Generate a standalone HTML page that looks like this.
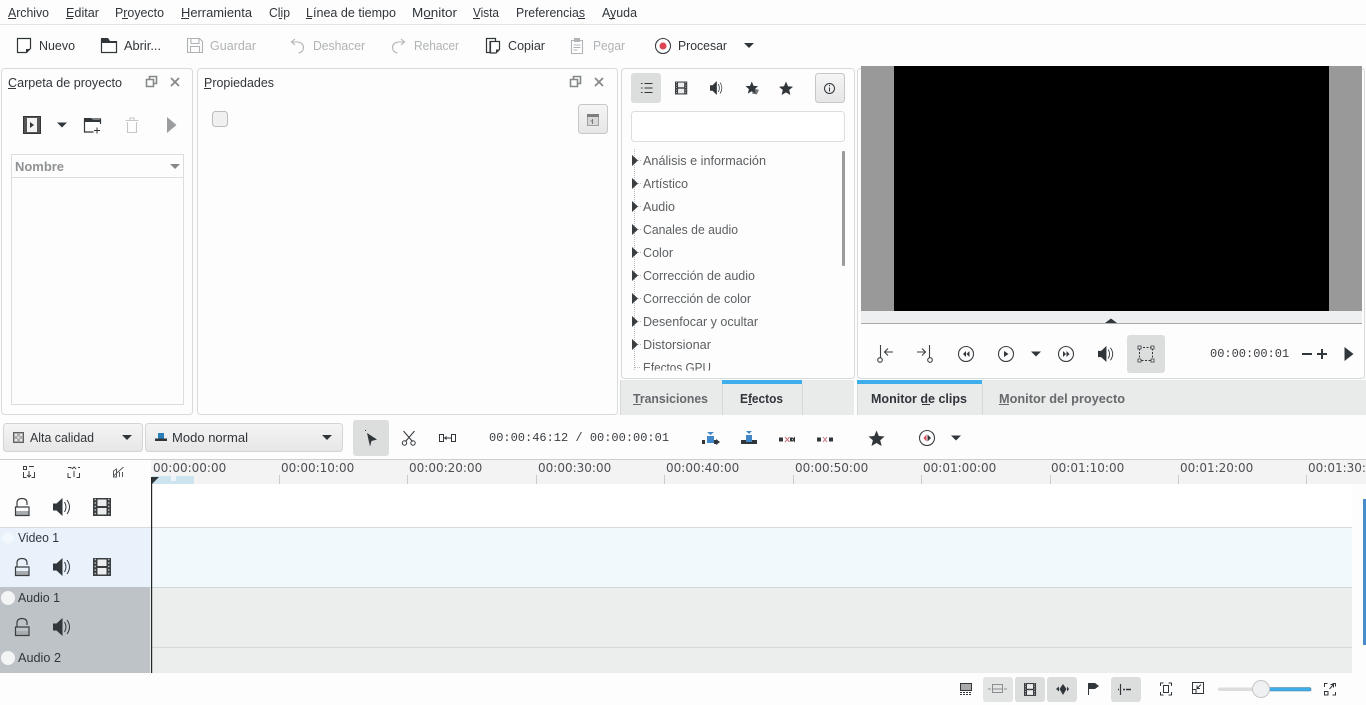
<!DOCTYPE html>
<html><head><meta charset="utf-8"><title>Kdenlive</title>
<style>
html,body{margin:0;padding:0;background:#fdfdfd;width:1366px;height:705px;overflow:hidden}
svg{display:block}
text{font-family:"Liberation Sans",sans-serif;font-size:12.5px;fill:#31363b}
.m{font-family:"Liberation Mono",monospace;font-size:12px;fill:#3a3e42}
.r{font-family:"DejaVu Sans",sans-serif;font-size:12px;fill:#4d4f52}
.d{fill:#b0b3b5}
.g{fill:#5c6063}
.t{font-weight:bold;fill:#666a6d}
.u{stroke:#31363b;stroke-width:1}
</style></head><body>
<svg width="1366" height="705" viewBox="0 0 1366 705" xmlns="http://www.w3.org/2000/svg">
<defs>
<linearGradient id="b" x1="0" y1="0" x2="0" y2="1"><stop offset="0" stop-color="#f5f5f5"/><stop offset="1" stop-color="#e6e6e6"/></linearGradient>
<g id="spk"><path d="M0 5.500h3.500l6-5.500v18l-6-5.500H0z" fill="#31363b"/><path d="M11.500 4q3 5 0 10M14 2q5 7 0 14" fill="none" stroke="#31363b" stroke-width="1"/></g>
<g id="lock"><rect x="2" y="12" width="12.500" height="4" fill="#a9acae"/><path d="M1.500 8V16.500H15V8ZM3 8V4Q3 -.5 8 -.5T13 4V6" fill="none" stroke="#3b3f42" stroke-width="1.200"/></g>
<g id="film"><rect x="0" y="0" width="18" height="18" fill="#3a3e41"/><rect x="4.500" y="1.500" width="9" height="6.500" fill="#eceded"/><rect x="4.500" y="10" width="9" height="6.500" fill="#eceded"/><path d="M1.500 1.500h1.500M1.500 5h1.500M1.500 8.500h1.500M1.500 12h1.500M1.500 15.500h1.500M15 1.500h1.500M15 5h1.500M15 8.500h1.500M15 12h1.500M15 15.500h1.500" stroke="#b5b7b8" stroke-width="1.400"/></g>
<g id="star"><path d="M7 0l2 4.800 5 .4-3.800 3.300 1.200 5L7 10.900 2.600 13.500l1.200-5L0 5.200l5-.4z" fill="#31363b"/></g>
<path id="dn" d="M0 0h10l-5 5z" fill="#31363b"/>
<path id="tri" d="M0 0l6 5.500-6 5.500z" fill="#3a3e41"/>
</defs>

<!-- menu -->
<rect x="0" y="24" width="1366" height="1" fill="#e3e4e5"/>
<g>
<text x="8" y="17" textLength="41" lengthAdjust="spacingAndGlyphs">Archivo</text>
<text x="66" y="17" textLength="33" lengthAdjust="spacingAndGlyphs">Editar</text>
<text x="115" y="17" textLength="49" lengthAdjust="spacingAndGlyphs">Proyecto</text>
<text x="181" y="17" textLength="71" lengthAdjust="spacingAndGlyphs">Herramienta</text>
<text x="269" y="17" textLength="21" lengthAdjust="spacingAndGlyphs">Clip</text>
<text x="306" y="17" textLength="90" lengthAdjust="spacingAndGlyphs">Línea de tiempo</text>
<text x="412" y="17" textLength="45" lengthAdjust="spacingAndGlyphs">Monitor</text>
<text x="473" y="17" textLength="26" lengthAdjust="spacingAndGlyphs">Vista</text>
<text x="516" y="17" textLength="69" lengthAdjust="spacingAndGlyphs">Preferencias</text>
<text x="602" y="17" textLength="35" lengthAdjust="spacingAndGlyphs">Ayuda</text>
<path class="u" d="M8 18.500h8M66 18.500h7M122 18.500h6M181 18.500h8M279 18.500h3M306 18.500h6M424 18.500h9M473 18.500h7M578 18.500h7M609 18.500h6"/>
</g>

<!-- toolbar -->
<g>
<path d="M17.500 38.500h13v10l-4 4h-9z" fill="#fff" stroke="#31363b" stroke-width="1.200"/><path d="M30 49h-4v4z" fill="#31363b"/>
<path d="M101.500 39v13.500h15V42h-15" fill="#fff" stroke="#31363b" stroke-width="1.200"/><path d="M101 38h7l2 3h7v2h-16z" fill="#31363b"/>
<text x="39" y="50" textLength="36" lengthAdjust="spacingAndGlyphs">Nuevo</text>
<text x="124" y="50" textLength="37" lengthAdjust="spacingAndGlyphs">Abrir...</text>
<path d="M187.500 38.500h12l3 3v11h-15zM191 38.500v5h8v-5M190.500 52.500v-6h9v6" fill="none" stroke="#b0b3b5" stroke-width="1.100"/>
<text class="d" x="210" y="50" textLength="46" lengthAdjust="spacingAndGlyphs">Guardar</text>
<path d="M295 39l-3.500 3 3.500 3M292 42h6q5.500 1 5.500 5.500t-5 5.500" fill="none" stroke="#b0b3b5" stroke-width="1.100"/>
<text class="d" x="313" y="50" textLength="52" lengthAdjust="spacingAndGlyphs">Deshacer</text>
<path d="M401 39l3.500 3-3.500 3M404 42h-6q-5.500 1-5.500 5.500t5 5.500" fill="none" stroke="#b0b3b5" stroke-width="1.100"/>
<text class="d" x="414" y="50" textLength="45" lengthAdjust="spacingAndGlyphs">Rehacer</text>
<path d="M486.500 38.500h9v3h-5.500v11h-3.500zM490.500 41.500h9v8l-3.500 3.500h-5.500z" fill="#fff" stroke="#31363b" stroke-width="1.200"/><path d="M500 49.500h-4v4z" fill="#31363b"/>
<text x="508" y="50" textLength="37" lengthAdjust="spacingAndGlyphs">Copiar</text>
<path d="M571.500 40.500h3v-2h5v2h3v13h-11z" fill="#fff" stroke="#b0b3b5" stroke-width="1.100"/><rect x="574" y="38" width="6" height="4" fill="#b0b3b5"/><path d="M573.500 45h7M573.500 47.500h7M573.500 50h4" stroke="#b0b3b5"/>
<text class="d" x="593" y="50" textLength="32" lengthAdjust="spacingAndGlyphs">Pegar</text>
<circle cx="663" cy="46" r="7.500" fill="#fff" stroke="#3a3e41" stroke-width="1.100"/><circle cx="663" cy="46" r="3.500" fill="#da4453"/>
<text x="678" y="50" textLength="49" lengthAdjust="spacingAndGlyphs">Procesar</text>
<use href="#dn" x="744" y="43"/>
</g>

<!-- panels -->
<rect x="1.500" y="68.500" width="191" height="346" rx="3" fill="#fdfdfd" stroke="#d9dadb"/>
<rect x="197.500" y="68.500" width="420" height="346" rx="3" fill="#fdfdfd" stroke="#d9dadb"/>
<rect x="621.500" y="68.500" width="233" height="310" rx="3" fill="#fdfdfd" stroke="#d9dadb"/>
<rect x="857.500" y="68.500" width="507" height="310" rx="3" fill="#fdfdfd" stroke="#d9dadb"/>

<!-- project bin -->
<text x="8" y="87" textLength="114" lengthAdjust="spacingAndGlyphs">Carpeta de proyecto</text><path class="u" d="M8 88.500h8"/>
<path d="M149.500 79.500v-3h7v7h-3M146.500 79.500h7v7h-7z" fill="none" stroke="#85888a" stroke-width="1.600"/>
<path d="M171 78l8 8M179 78l-8 8" stroke="#85888a" stroke-width="1.700"/>
<rect x="23.500" y="116.500" width="17" height="17" fill="#555" stroke="#31363b"/><rect x="27" y="118" width="10" height="14" fill="#f3f3f3"/><path d="M30 122l4 3-4 3z" fill="#31363b"/>
<use href="#dn" x="57" y="122.500"/>
<path d="M84.500 119v13h9M100.500 124v-5h-16" fill="none" stroke="#31363b" stroke-width="1.200"/><path d="M84 118h7l2 2h7v2H84z" fill="#31363b"/><path d="M94 130.500h6M97 127.500v6" stroke="#31363b"/>
<path d="M125.500 120.500h13M127.500 122v10.500h9V122M130 120v-2h4v2" fill="none" stroke="#c4c6c7" stroke-width="1.100"/>
<path d="M167 117l9.500 8-9.500 8z" fill="#9a9c9e"/>
<rect x="11.500" y="154.500" width="172" height="250" fill="#fdfdfd" stroke="#dcdddd"/>
<path d="M11.500 177.500h172" stroke="#dcdddd"/>
<text x="15" y="171" textLength="49" lengthAdjust="spacingAndGlyphs" style="font-weight:bold;fill:#8f9294">Nombre</text>
<path d="M170 164h10l-5 5z" fill="#85888a"/>

<!-- properties -->
<text x="204" y="87" textLength="70" lengthAdjust="spacingAndGlyphs">Propiedades</text><path class="u" d="M204 88.500h7"/>
<path d="M573.500 79.500v-3h7v7h-3M570.500 79.500h7v7h-7z" fill="none" stroke="#85888a" stroke-width="1.600"/>
<path d="M595 78l8 8M603 78l-8 8" stroke="#85888a" stroke-width="1.700"/>
<rect x="212.500" y="111.500" width="15" height="15" rx="3" fill="#f0f0f0" stroke="#b9bbbc"/>
<rect x="578.500" y="104.500" width="29" height="29" rx="3" fill="url(#b)" stroke="#c6c7c8"/>
<rect x="587.500" y="114.500" width="11" height="11" fill="#d8d8d8" stroke="#a0a0a0"/><rect x="587" y="114" width="12" height="3" fill="#7d7d7d"/><path d="M592.500 119v5M590.500 121h2" stroke="#777"/>

<!-- effects -->
<rect x="631" y="73" width="30" height="30" rx="3" fill="#dcdddd"/>
<path d="M641 83.500h1.500M641 88h1.500M641 92.500h1.500M644.500 83.500h8M644.500 88h8M644.500 92.500h8" stroke="#31363b" stroke-width="1.100"/>
<use href="#film" transform="translate(675 81.500) scale(.68 .72)"/>
<use href="#spk" transform="translate(710 81) scale(.72 .78)"/>
<g transform="translate(745.500 81.500) scale(.9)"><path d="M8 7l7 2.500-2.500 5-5-1z" fill="#777a7c"/><use href="#star"/></g>
<use href="#star" x="779" y="81.500"/>
<rect x="815.500" y="73.500" width="29" height="29" rx="3" fill="url(#b)" stroke="#c6c7c8"/>
<circle cx="829.500" cy="88.500" r="5" fill="none" stroke="#31363b"/><path d="M829.500 85v1.200M829.500 87.500v4" stroke="#31363b"/>
<rect x="631.500" y="111.500" width="213" height="30" rx="3" fill="#fff" stroke="#dcdddd"/>
<path d="M634.500 149v222" stroke="#b8b9ba" stroke-dasharray="1 1"/>
<path d="M638 160.500h4M638 183.500h4M638 206.500h4M638 229.500h4M638 252.500h4M638 275.500h4M638 298.500h4M638 321.500h4M638 344.500h4M635 367.500h6" stroke="#b8b9ba" stroke-dasharray="1 1"/>
<use href="#tri" x="632" y="155"/><use href="#tri" x="632" y="178"/><use href="#tri" x="632" y="201"/><use href="#tri" x="632" y="224"/><use href="#tri" x="632" y="247"/><use href="#tri" x="632" y="270"/><use href="#tri" x="632" y="293"/><use href="#tri" x="632" y="316"/><use href="#tri" x="632" y="339"/>
<text class="g" x="643" y="165" textLength="123" lengthAdjust="spacingAndGlyphs">Análisis e información</text>
<text class="g" x="643" y="188" textLength="45" lengthAdjust="spacingAndGlyphs">Artístico</text>
<text class="g" x="643" y="211" textLength="32" lengthAdjust="spacingAndGlyphs">Audio</text>
<text class="g" x="643" y="234" textLength="95" lengthAdjust="spacingAndGlyphs">Canales de audio</text>
<text class="g" x="643" y="257" textLength="30" lengthAdjust="spacingAndGlyphs">Color</text>
<text class="g" x="643" y="280" textLength="112" lengthAdjust="spacingAndGlyphs">Corrección de audio</text>
<text class="g" x="643" y="303" textLength="108" lengthAdjust="spacingAndGlyphs">Corrección de color</text>
<text class="g" x="643" y="326" textLength="115" lengthAdjust="spacingAndGlyphs">Desenfocar y ocultar</text>
<text class="g" x="643" y="349" textLength="68" lengthAdjust="spacingAndGlyphs">Distorsionar</text>
<svg x="620" y="355" width="230" height="15.500"><text class="g" x="23" y="17" textLength="68" lengthAdjust="spacingAndGlyphs">Efectos GPU</text></svg>
<rect x="842" y="151" width="3" height="115" rx="1" fill="#999b9c"/>

<!-- monitor -->
<rect x="861" y="66" width="501" height="245" fill="#999"/>
<rect x="894" y="66" width="435" height="245" fill="#000"/>
<rect x="861" y="311" width="501" height="12" fill="#eeeff0"/>
<rect x="861" y="323" width="501" height="1" fill="#aaa"/>
<path d="M1105 323l6-4.500 6 4.500z" fill="#31363b"/>
<g fill="none" stroke="#3c4043" stroke-width="1.100">
<path d="M880.500 345v13"/><circle cx="880" cy="360" r="2.300"/><path d="M893 352h-8M888 348.500l-3.500 3.500 3.500 3.500"/>
<path d="M929.500 345v13"/><circle cx="930" cy="360" r="2.300"/><path d="M917 352h8M922 348.500l3.500 3.500-3.500 3.500"/>
<circle cx="966" cy="354" r="7.500"/><circle cx="1006" cy="354" r="7.500"/><circle cx="1066" cy="354" r="7.500"/>
</g>
<path d="M966 351v6l-3-3zM969.500 351v6l-3-3zM1004 351l4.500 3-4.500 3zM1063 351l3 3-3 3zM1066.500 351l3 3-3 3z" fill="#31363b"/>
<use href="#dn" x="1031" y="351.500"/>
<use href="#spk" transform="translate(1098 346) scale(.89)"/>
<rect x="1127" y="335" width="38" height="38" rx="3" fill="#dcdddd"/>
<path d="M1139.500 347.500h13v13h-13z" fill="none" stroke="#31363b" stroke-dasharray="2 1.500"/>
<path d="M1138 346h3v3h-3zM1151 346h3v3h-3zM1138 359h3v3h-3zM1151 359h3v3h-3z" fill="#eee" stroke="#31363b" stroke-width=".8"/>
<text class="m" x="1210" y="357">00:00:00:01</text>
<path d="M1302 354h10" stroke="#31363b" stroke-width="2"/>
<path d="M1317 354h10M1322 349v10" stroke="#31363b" stroke-width="2"/>
<path d="M1344.500 347l9 7-9 7z" fill="#31363b"/>

<!-- tabs -->
<rect x="620" y="380" width="234" height="35" fill="#e9eaea"/>
<rect x="857" y="380" width="509" height="35" fill="#e9eaea"/>
<path d="M722.500 384v31M802.500 384v31M982.500 384v31M620.500 380v35M857.500 380v35" stroke="#d6d7d8"/>
<rect x="722" y="380" width="80" height="4" fill="#3daee9"/>
<rect x="857" y="380" width="125" height="4" fill="#3daee9"/>
<text class="t" x="633" y="403" textLength="75" lengthAdjust="spacingAndGlyphs">Transiciones</text><path d="M633 404.500h8" stroke="#666a6d"/>
<text class="t" x="740" y="403" textLength="43" lengthAdjust="spacingAndGlyphs" style="fill:#31363b">Efectos</text><path class="u" d="M748 404.500h4"/>
<text class="t" x="871" y="403" textLength="96" lengthAdjust="spacingAndGlyphs" style="fill:#31363b">Monitor de clips</text><path class="u" d="M922 404.500h8"/>
<text class="t" x="999" y="403" textLength="126" lengthAdjust="spacingAndGlyphs">Monitor del proyecto</text><path d="M999 404.500h10" stroke="#666a6d"/>

<!-- timeline toolbar -->
<rect x="3.500" y="423.500" width="139" height="28" rx="3" fill="url(#b)" stroke="#d3d4d5"/>
<rect x="145.500" y="423.500" width="197" height="28" rx="3" fill="url(#b)" stroke="#d3d4d5"/>
<rect x="13.500" y="432.500" width="10" height="10" fill="#aaa" stroke="#5e6163"/><path d="M15 434h2v2h-2zM20 434h2v2h-2zM17.500 436.500h2v2h-2zM15 439h2v2h-2zM20 439h2v2h-2z" fill="#eee"/>
<text x="30" y="442" textLength="64" lengthAdjust="spacingAndGlyphs">Alta calidad</text>
<use href="#dn" x="122" y="435"/>
<rect x="155" y="438.500" width="12" height="2.500" fill="#31363b"/><rect x="158" y="433" width="6" height="5.500" fill="#2980b9"/>
<text x="172" y="442" textLength="76" lengthAdjust="spacingAndGlyphs">Modo normal</text>
<use href="#dn" x="322" y="435"/>
<rect x="353" y="420" width="36" height="36" rx="3" fill="#dcdddd"/>
<path d="M367 433l10 6.500-5.500 1.500-1.500 5.500z" fill="#31363b"/><rect x="365" y="430" width="1" height="1" fill="#31363b"/>
<g fill="none" stroke="#31363b" stroke-width="1"><path d="M403.500 431l9 10.500M414.500 431l-9 10.500"/><circle cx="404.500" cy="443" r="2.200"/><circle cx="413" cy="443" r="2.200"/></g>
<path d="M439.500 434.500h4v7h-4zM451.500 434.500h4v7h-4z" fill="none" stroke="#31363b"/><path d="M444 438h7M446.500 436.500l-1.500 1.500 1.500 1.500" stroke="#31363b"/>
<text class="m" x="489" y="441">00:00:46:12 / 00:00:00:01</text>
<g>
<path d="M702 440h3v4h-3zM716 439v6l4-3z" fill="#31363b"/><rect x="707" y="436" width="7" height="7" fill="#3f87c8"/><path d="M707 432h7l-3.500 3z" fill="#3f87c8"/><rect x="714" y="440" width="3" height="4" fill="#31363b"/>
<rect x="741" y="440" width="16" height="4" fill="#31363b"/><rect x="746" y="435" width="6" height="7" fill="#3f87c8"/><path d="M746 431h6l-3 3z" fill="#3f87c8"/>
<path d="M779 437.500h4v4h-4zM790 437.500h3v4h-3zM795 436.500l-3 3 3 3z" fill="#31363b"/><path d="M795 437.500h-1v4h1z" fill="#31363b"/><path d="M785 437l4.500 5M789.500 437l-4.500 5" stroke="#c9707c"/>
<path d="M817 437.500h4v4h-4zM829 437.500h4v4h-4z" fill="#31363b"/><path d="M823 437l4 5M827 437l-4 5" stroke="#c9707c"/>
</g>
<use href="#star" transform="translate(868.500 430.500) scale(1.150)"/>
<circle cx="927" cy="438" r="7.500" fill="none" stroke="#3c4043" stroke-width="1.100"/><path d="M926.500 434.500v7l-3-3.500z" fill="#da4453"/><path d="M927.500 434.500l3.500 3.500-3.500 3.500z" fill="#31363b"/>
<use href="#dn" x="951" y="435.500"/>

<!-- ruler -->
<rect x="0" y="459" width="1366" height="1" fill="#cdcecf"/>
<rect x="151" y="460" width="1215" height="24" fill="#f3f3f4"/>
<rect x="152" y="476" width="42" height="8" fill="#cbe4ef"/>
<rect x="171" y="476" width="5" height="5" fill="#eef4f7"/>
<path d="M152 484v-7h7z" fill="#31363b"/>
<text class="r" x="153" y="472">00:00:00:00</text>
<text class="r" x="281" y="472">00:00:10:00</text>
<text class="r" x="409" y="472">00:00:20:00</text>
<text class="r" x="538" y="472">00:00:30:00</text>
<text class="r" x="666" y="472">00:00:40:00</text>
<text class="r" x="795" y="472">00:00:50:00</text>
<text class="r" x="923" y="472">00:01:00:00</text>
<text class="r" x="1051" y="472">00:01:10:00</text>
<text class="r" x="1180" y="472">00:01:20:00</text>
<text class="r" x="1308" y="472">00:01:30:00</text>
<path d="M279.500 475v9M407.500 475v9M536.500 475v9M664.500 475v9M793.500 475v9M921.500 475v9M1050.500 475v9M1178.500 475v9M1306.500 475v9" stroke="#c9cacb"/>
<g fill="none" stroke="#3c4043" stroke-width="1">
<path d="M23.500 466.500h3v3h-3zM29 466.500h5M23.500 472v5.500h3M34.500 472v5.500h-3M29 471v6M27 475l2 2 2-2"/>
<path d="M68 467.500h3v1M68 473v4.500h3M79.500 473v4.500h-3M74 477v-6M72 469l2-2 2 2M78 467.500h2" />
<path d="M113.500 476l10-9M113.500 471l3-2v8h-3zM119.500 472v5M122.500 472v5" stroke="#55585b"/>
</g>

<!-- tracks -->
<rect x="152" y="484" width="1200" height="43" fill="#fff"/>
<rect x="0" y="527" width="1352" height="1" fill="#d9dada"/>
<rect x="0" y="528" width="150" height="59" fill="#e9f2fa"/>
<rect x="150" y="528" width="1202" height="59" fill="#f1f9fd"/>
<rect x="0" y="587" width="1352" height="1" fill="#d4d5d6"/>
<rect x="0" y="587" width="150" height="86" fill="#bdc3c7"/>
<rect x="150" y="588" width="1202" height="85" fill="#eceded"/>
<rect x="152" y="647" width="1200" height="1" fill="#d7d8d8"/>
<rect x="151" y="477" width="1.200" height="196" fill="#232629"/>
<rect x="1363" y="499" width="3" height="146" fill="#4a8cc8"/>

<use href="#lock" x="14" y="499"/><use href="#spk" transform="translate(53 498)"/><use href="#film" x="93" y="498"/>
<circle cx="8" cy="538" r="5.500" fill="#f3f8fc"/>
<text x="18" y="542" textLength="41" lengthAdjust="spacingAndGlyphs">Video 1</text>
<use href="#lock" x="14" y="559"/><use href="#spk" transform="translate(53 558)"/><use href="#film" x="93" y="558"/>
<circle cx="8" cy="598" r="7" fill="#f3f4f4"/>
<text x="18" y="602" textLength="42" lengthAdjust="spacingAndGlyphs">Audio 1</text>
<use href="#lock" x="14" y="619"/><use href="#spk" transform="translate(53 618)"/>
<circle cx="8" cy="658" r="7" fill="#f3f4f4"/>
<text x="18" y="662" textLength="43" lengthAdjust="spacingAndGlyphs">Audio 2</text>

<!-- status bar -->
<rect x="983" y="677" width="30" height="25" rx="3" fill="#e3e4e4"/>
<rect x="1015" y="677" width="30" height="25" rx="3" fill="#dcdddd"/>
<rect x="1047" y="677" width="30" height="25" rx="3" fill="#dcdddd"/>
<rect x="1111" y="677" width="30" height="25" rx="3" fill="#dcdddd"/>
<rect x="960.500" y="683.500" width="11" height="7" fill="#aaa" stroke="#31363b"/><path d="M960 692.500h12M960 694.500h12" stroke="#31363b" stroke-dasharray="2 1"/>
<path d="M992.500 684.500h10v8h-10zM988 689h3M1004 689h3M992 689h11" fill="none" stroke="#8b8e90"/>
<use href="#film" transform="translate(1024 683) scale(.67 .72)"/>
<path d="M1056 689l3-2.500v5zM1059.500 689l3.500-5 3.500 5-3.500 6zM1067 686.500l2 2.500-2 2.500z" fill="#31363b"/>
<path d="M1088.500 683v12" stroke="#31363b"/><path d="M1089 683h6l4 3-4 3h-6z" fill="#31363b"/>
<path d="M1120.500 684v11" stroke="#31363b" stroke-width="1.200"/><path d="M1118 689.500h1M1123 689.500h2M1126 689.500h5" stroke="#31363b" stroke-width="1.600"/>
<path d="M1163.500 685.500h5v7h-5z" fill="none" stroke="#31363b"/>
<path d="M1160.500 686v-3h3M1168.500 683h3v3M1160.500 692v3h3M1168.500 695h3v-3" fill="none" stroke="#31363b"/>
<path d="M1192.500 689v-6.500h11v11h-7M1192.500 689.500h3.500v4h-3.500zM1201 684.500l-4 4M1197 685.500v3h3" fill="none" stroke="#31363b"/>
<rect x="1218" y="687.500" width="52" height="3.500" rx="1.500" fill="#dcdddd"/>
<rect x="1262" y="687.500" width="49" height="3.500" rx="1.500" fill="#3daee9" stroke="#4d7f9e" stroke-width=".6"/>
<circle cx="1261" cy="689" r="8.500" fill="#eff0f1" stroke="#c5c6c7"/>
<path d="M1324.500 687v-3.500h3M1332.500 683.500h3v3M1324.500 691.500h3.500v3.500h-3.500zM1335.500 692v3h-3M1329.500 689l4-4.500M1330.500 684.500h3v3" fill="none" stroke="#31363b"/>
</svg>
</body></html>
